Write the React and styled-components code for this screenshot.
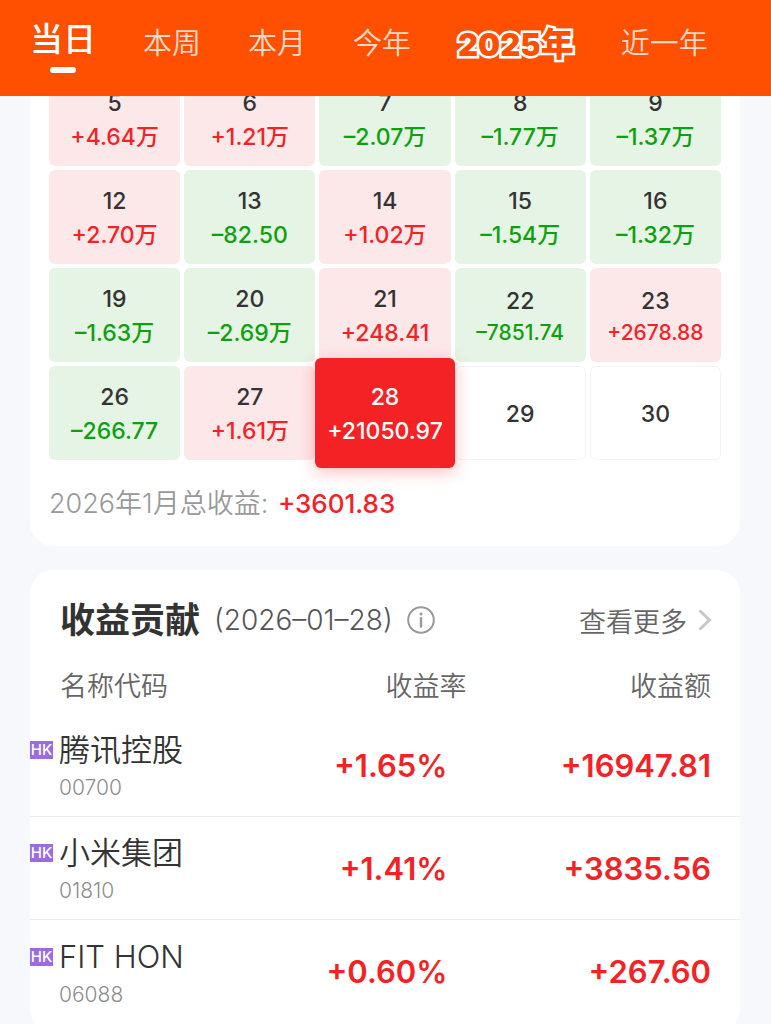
import React, { useState } from 'react';
import styled, { createGlobalStyle } from 'styled-components';

const GlobalStyle = createGlobalStyle`
  * {
    box-sizing: border-box;
  }

  body {
    margin: 0;
    background: #f6f8fb;
    font-family: Inter, "Noto Sans CJK SC", sans-serif;
    color: #333;
  }

  button {
    margin: 0;
    padding: 0;
    border: 0;
    background: none;
    font-family: inherit;
    color: inherit;
    cursor: pointer;
  }
`;

const RED = '#f42225';
const GREEN = '#0fa00f';

const Page = styled.div`
  display: flex;
  flex-direction: column;
  height: 100vh;
`;

const Tabs = styled.nav`
  flex: none;
  display: flex;
  gap: 47px;
  height: 96px;
  padding: 0 30px;
  background: #ff4f00;
`;

const Tab = styled.button`
  display: flex;
  flex-direction: column;
  align-items: center;
  padding-top: ${(props) => (props.$active ? '16px' : '21px')};
  font-size: ${(props) => (props.$active ? '33px' : '29px')};
  font-weight: ${(props) => (props.$active ? 500 : 350)};
  line-height: 46px;
  white-space: nowrap;
  color: ${(props) => (props.$active ? '#fff' : 'rgba(255, 255, 255, 0.8)')};
`;

const TabLine = styled.span`
  width: 26px;
  height: 6px;
  margin-top: 5px;
  border-radius: 3px;
  background: #fff;
`;

// outlined lettering of the yearly report tab
const YearArt = styled.span`
  font-size: 33px;
  font-weight: 900;
  color: #ff4f00;
  -webkit-text-stroke: 5px #fff;
  paint-order: stroke fill;
  stroke-linejoin: round;
`;

const YearDigits = styled.span`
  font-size: 31px;
`;

const Scroller = styled.main`
  flex: 1;
  min-height: 0;
  overflow-y: auto;
  scrollbar-width: none;
  padding: 0 31px 24px 30px;
`;

const Card = styled.section`
  border-radius: 24px;
  background: #fff;
`;

const CalendarCard = styled(Card)`
  margin-top: -44px;
  margin-bottom: 24px;
  padding: 20px 19px 24px;
`;

const Days = styled.div`
  display: grid;
  grid-template-columns: repeat(5, 1fr);
  grid-auto-rows: 94px;
  gap: 4px;
`;

const tones = {
  up: { bg: '#fde8e9', text: RED },
  down: { bg: '#e5f4e5', text: GREEN },
  none: { bg: '#fff', text: '#333' },
};

const Day = styled.button`
  display: flex;
  flex-direction: column;
  align-items: center;
  justify-content: center;
  padding-top: 2px;
  border-radius: 6px;
  background: ${(props) => tones[props.$tone].bg};
  border: ${(props) => (props.$tone === 'none' ? '1px solid #f3f4f7' : '0')};
  font-size: 23px;
  font-weight: 500;
  line-height: 34px;

  ${(props) => props.$selected && `
    position: relative;
    margin: -8px -4px;
    background: ${RED};
    color: #fff;
    box-shadow: 0 4px 16px rgba(244, 34, 37, 0.3);
  `}
`;

const DayProfit = styled.span`
  color: ${(props) => (props.$selected ? '#fff' : tones[props.$tone].text)};
  font-size: ${(props) => (props.$small ? '21px' : '23px')};
  line-height: ${(props) => (props.$small ? '30px' : '34px')};
`;

const Summary = styled.p`
  margin: 26px 0 0;
  font-size: 27px;
  font-weight: 350;
  line-height: 36px;
  color: #999;
`;

const Total = styled.strong`
  margin-left: 2px;
  font-size: 26px;
  font-weight: 500;
  color: ${RED};
`;

const ContributionCard = styled(Card)`
  padding: 24px 0 10px;
`;

const CardHead = styled.header`
  display: flex;
  align-items: center;
  height: 52px;
  margin-bottom: 14px;
  padding: 0 28px 0 30px;
`;

const Title = styled.h2`
  margin: 0 14px 0 0;
  font-size: 35px;
  font-weight: 700;
  line-height: 52px;
`;

const DateText = styled.span`
  font-size: 28px;
  font-weight: 300;
  color: #555;
`;

const InfoButton = styled.button`
  display: flex;
  margin-left: 14px;
`;

const MoreLink = styled.a`
  display: flex;
  align-items: center;
  gap: 11px;
  margin-left: auto;
  font-size: 27px;
  font-weight: 350;
  color: #666;
  text-decoration: none;
`;

const Table = styled.table`
  width: 100%;
  table-layout: fixed;
  border-collapse: separate;
  border-spacing: 0;
`;

const HeadCell = styled.th`
  width: ${(props) => props.$width};
  height: 54px;
  padding: ${(props) => props.$pad};
  font-size: 27px;
  font-weight: 350;
  line-height: 36px;
  text-align: ${(props) => props.$align || 'right'};
  color: #666;
`;

const Row = styled.tr`
  height: 103px;

  &:not(:last-child) td {
    border-bottom: 1px solid #eeeff1;
  }
`;

const NameCell = styled.td`
  padding: 0;
`;

const NameLine = styled.div`
  display: flex;
  align-items: center;
  gap: 6px;
  font-size: 31px;
  font-weight: 350;
  line-height: 44px;
  white-space: nowrap;
`;

const Market = styled.span`
  width: 23px;
  background: #9b6be3;
  color: #fff;
  font-size: 15px;
  font-weight: 500;
  line-height: 18px;
  text-align: center;
`;

const Code = styled.div`
  margin-top: 2px;
  padding-left: 29px;
  font-size: 21px;
  font-weight: 300;
  line-height: 28px;
  color: #8e8e8e;
`;

const NumberCell = styled.td`
  padding: ${(props) => props.$pad};
  font-size: 31px;
  font-weight: 600;
  text-align: right;
  color: ${RED};
`;

const days = [
  { day: 5, profit: '+4.64万' },
  { day: 6, profit: '+1.21万' },
  { day: 7, profit: '–2.07万' },
  { day: 8, profit: '–1.77万' },
  { day: 9, profit: '–1.37万' },
  { day: 12, profit: '+2.70万' },
  { day: 13, profit: '–82.50' },
  { day: 14, profit: '+1.02万' },
  { day: 15, profit: '–1.54万' },
  { day: 16, profit: '–1.32万' },
  { day: 19, profit: '–1.63万' },
  { day: 20, profit: '–2.69万' },
  { day: 21, profit: '+248.41' },
  { day: 22, profit: '–7851.74' },
  { day: 23, profit: '+2678.88' },
  { day: 26, profit: '–266.77' },
  { day: 27, profit: '+1.61万' },
  { day: 28, profit: '+21050.97' },
  { day: 29 },
  { day: 30 },
];

const stocks = [
  { name: '腾讯控股', code: '00700', rate: '+1.65%', amount: '+16947.81' },
  { name: '小米集团', code: '01810', rate: '+1.41%', amount: '+3835.56' },
  { name: 'FIT HON', code: '06088', rate: '+0.60%', amount: '+267.60' },
];

const tabs = ['当日', '本周', '本月', '今年', '2025年', '近一年'];

function getTone(profit) {
  if (!profit) return 'none';
  return profit[0] === '+' ? 'up' : 'down';
}

function InfoIcon() {
  return (
    <svg width="28" height="28" viewBox="0 0 28 28" fill="none">
      <circle cx="14" cy="14" r="12.8" stroke="#999" strokeWidth="2" />
      <circle cx="14" cy="8" r="1.5" fill="#999" />
      <path d="M14 12.2v8.4" stroke="#999" strokeWidth="2.4" strokeLinecap="round" />
    </svg>
  );
}

function Chevron() {
  return (
    <svg width="14" height="22" viewBox="0 0 14 22" fill="none">
      <path d="M1.5 1.5L11.5 11L1.5 20.5" stroke="#c8c8c8" strokeWidth="3" />
    </svg>
  );
}

function Calendar() {
  const [selected, setSelected] = useState(28);

  return (
    <CalendarCard>
      <Days>
        {days.map(({ day, profit }) => {
          const tone = getTone(profit);
          const isSelected = day === selected;
          return (
            <Day
              key={day}
              $tone={tone}
              $selected={isSelected}
              onClick={() => profit && setSelected(day)}
            >
              <span>{day}</span>
              {profit && (
                <DayProfit
                  $tone={tone}
                  $selected={isSelected}
                  $small={profit.length === 8}
                >
                  {profit}
                </DayProfit>
              )}
            </Day>
          );
        })}
      </Days>
      <Summary>
        2026年1月总收益: <Total>+3601.83</Total>
      </Summary>
    </CalendarCard>
  );
}

function Contribution() {
  return (
    <ContributionCard>
      <CardHead>
        <Title>收益贡献</Title>
        <DateText>(2026–01–28)</DateText>
        <InfoButton aria-label="说明">
          <InfoIcon />
        </InfoButton>
        <MoreLink href="#more">
          查看更多
          <Chevron />
        </MoreLink>
      </CardHead>
      <Table>
        <thead>
          <tr>
            <HeadCell $width="36%" $align="left" $pad="0 0 0 30px">名称代码</HeadCell>
            <HeadCell $width="28%" $pad="0 18px 0 0">收益率</HeadCell>
            <HeadCell $width="36%" $pad="0 29px 0 0">收益额</HeadCell>
          </tr>
        </thead>
        <tbody>
          {stocks.map((stock) => (
            <Row key={stock.code}>
              <NameCell>
                <NameLine>
                  <Market>HK</Market>
                  {stock.name}
                </NameLine>
                <Code>{stock.code}</Code>
              </NameCell>
              <NumberCell $pad="0 37px 0 0">{stock.rate}</NumberCell>
              <NumberCell $pad="0 29px 0 0">{stock.amount}</NumberCell>
            </Row>
          ))}
        </tbody>
      </Table>
    </ContributionCard>
  );
}

function App() {
  const [active, setActive] = useState('当日');

  return (
    <Page>
      <GlobalStyle />
      <Tabs>
        {tabs.map((tab) => (
          <Tab key={tab} $active={tab === active} onClick={() => setActive(tab)}>
            {tab === '2025年' ? (
              <YearArt>
                <YearDigits>2025</YearDigits>年
              </YearArt>
            ) : tab}
            {tab === active && <TabLine />}
          </Tab>
        ))}
      </Tabs>
      <Scroller>
        <Calendar />
        <Contribution />
      </Scroller>
    </Page>
  );
}

export default App;
